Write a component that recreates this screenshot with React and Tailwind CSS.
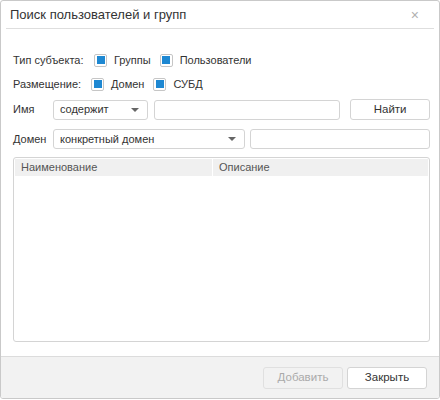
import React from 'react';

const Check = ({ label }) => (
    <label className="flex items-center gap-[7px]">
        <span className="flex h-[13px] w-[13px] items-center justify-center rounded-[2px] border border-[#c6c6c6] bg-white">
            <span className="h-[8px] w-[8px] bg-[#1e88d2]" />
        </span>
        <span>{label}</span>
    </label>
);

const Select = ({ value, className }) => (
    <div className={`flex h-[20px] items-center justify-between rounded-[3px] border border-[#d4d4d4] bg-white pl-[6px] pr-[8px] ${className}`}>
        <span>{value}</span>
        <span className="h-0 w-0 border-x-[4px] border-t-[4px] border-x-transparent border-t-[#666]" />
    </div>
);

const Field = ({ className }) => (
    <div className={`h-[20px] rounded-[3px] border border-[#d4d4d4] bg-white ${className}`} />
);

const App = () => {
    return (
        <div className="h-[400px] w-[440px] bg-white font-['Liberation_Sans',Arial,sans-serif] text-[11px] text-[#333]">
            <div className="flex h-[399px] w-[440px] flex-col overflow-hidden rounded-[3px] border border-[#c9c9c9]">
                <div className="flex h-[27px] items-center justify-between pl-[9px] pr-[20px]">
                    <span className="text-[13px] text-[#333]">Поиск пользователей и групп</span>
                    <span className="text-[14px] leading-none text-[#b0b0b0]">×</span>
                </div>
                <div className="mx-[5px] h-px bg-[#dedede]" />

                <div className="flex flex-1 flex-col pl-[12px] pr-[9px]">
                    <div className="mt-[23px] flex h-[16px] items-center">
                        <span className="w-[81px]">Тип субъекта:</span>
                        <div className="flex items-center gap-[9px]">
                            <Check label="Группы" />
                            <Check label="Пользователи" />
                        </div>
                    </div>
                    <div className="mt-[8px] flex h-[16px] items-center">
                        <span className="w-[78px]">Размещение:</span>
                        <div className="flex items-center gap-[9px]">
                            <Check label="Домен" />
                            <Check label="СУБД" />
                        </div>
                    </div>

                    <div className="mt-[7px] flex items-center">
                        <span className="w-[40px]">Имя</span>
                        <Select value="содержит" className="w-[95px]" />
                        <Field className="ml-[6px] w-[187px]" />
                        <button className="ml-[10px] h-[21px] w-[80px] rounded-[3px] border border-[#d4d4d4] bg-white text-[11.5px] text-[#333]">
                            Найти
                        </button>
                    </div>
                    <div className="mt-[9px] flex items-center">
                        <span className="w-[40px]">Домен</span>
                        <Select value="конкретный домен" className="w-[192px]" />
                        <Field className="ml-[5px] w-[180px]" />
                    </div>

                    <div className="mt-[8px] h-[185px] w-[417px] rounded-[3px] border border-[#d4d4d4] bg-white p-[1px]">
                        <div className="flex h-[17px] bg-[#f0f0f0] text-[#555]">
                            <div className="w-[198px] border-r border-white pl-[6px] leading-[17px]">Наименование</div>
                            <div className="flex-1 pl-[6px] leading-[17px]">Описание</div>
                        </div>
                    </div>
                </div>

                <div className="flex h-[42px] items-center justify-end gap-[4px] border-t border-[#dcdcdc] bg-[#f2f2f2] pr-[12px]">
                    <button className="h-[22px] w-[80px] rounded-[3px] border border-[#e0e0e0] bg-[#f2f2f2] text-[11.5px] text-[#aaa]">
                        Добавить
                    </button>
                    <button className="h-[22px] w-[80px] rounded-[3px] border border-[#d4d4d4] bg-white text-[11.5px] text-[#333]">
                        Закрыть
                    </button>
                </div>
            </div>
        </div>
    );
};

export default App;
